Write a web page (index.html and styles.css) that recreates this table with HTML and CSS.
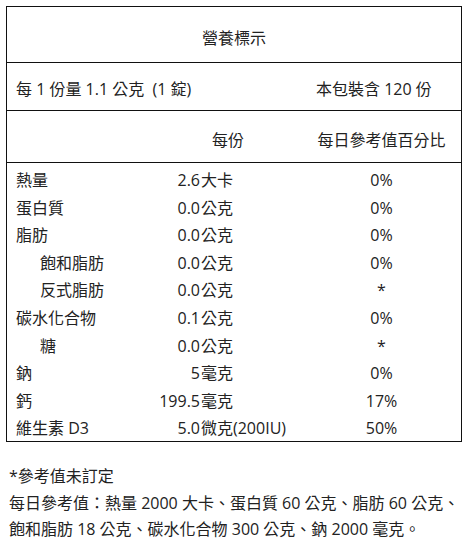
FILE: index.html
```html
<!DOCTYPE html>
<html lang="zh-Hant">
<head>
<meta charset="utf-8">
<title>營養標示</title>
<link rel="stylesheet" href="styles.css">
</head>
<body>
<div class="page">
  <div class="panel">
    <div class="title">營養標示</div>
    <div class="serving">
      <span class="serving-size">每 1 份量 1.1 公克&nbsp; (1 錠)</span>
      <span class="serving-count">本包裝含 120 份</span>
    </div>
    <div class="head">
      <span class="head-per">每份</span>
      <span class="head-pct">每日參考值百分比</span>
    </div>
    <div class="rows">
      <span class="name">熱量</span><span class="num">2.6</span><span class="unit">大卡</span><span class="pct">0%</span>
      <span class="name">蛋白質</span><span class="num">0.0</span><span class="unit">公克</span><span class="pct">0%</span>
      <span class="name">脂肪</span><span class="num">0.0</span><span class="unit">公克</span><span class="pct">0%</span>
      <span class="name sub">飽和脂肪</span><span class="num">0.0</span><span class="unit">公克</span><span class="pct">0%</span>
      <span class="name sub">反式脂肪</span><span class="num">0.0</span><span class="unit">公克</span><span class="pct">*</span>
      <span class="name">碳水化合物</span><span class="num">0.1</span><span class="unit">公克</span><span class="pct">0%</span>
      <span class="name sub">糖</span><span class="num">0.0</span><span class="unit">公克</span><span class="pct">*</span>
      <span class="name">鈉</span><span class="num">5</span><span class="unit">毫克</span><span class="pct">0%</span>
      <span class="name">鈣</span><span class="num">199.5</span><span class="unit">毫克</span><span class="pct">17%</span>
      <span class="name">維生素 D3</span><span class="num">5.0</span><span class="unit">微克(200IU)</span><span class="pct">50%</span>
    </div>
  </div>
  <div class="notes">
    <p>*參考值未訂定</p>
    <p>每日參考值：熱量 2000 大卡、蛋白質 60 公克、脂肪 60 公克、<br>飽和脂肪 18 公克、碳水化合物 300 公克、鈉 2000 毫克。</p>
  </div>
</div>
</body>
</html>
```

FILE: styles.css
```css
html, body {
  margin: 0;
  padding: 0;
  background: #fff;
}

body {
  font-family: "Open Sans", "Noto Sans CJK TC", sans-serif;
  font-size: 16px;
  color: #222;
}

.page {
  padding: 6px 0 0 6px;
}

.panel {
  width: 454px;
  border: 1px solid #111;
}

.title {
  height: 47px;
  padding-top: 8px;
  line-height: 47px;
  text-align: center;
  border-bottom: 1px solid #111;
}

.serving,
.head,
.rows {
  display: grid;
  grid-template-columns: 134px 50px 115px 133px;
  column-gap: 0;
  padding-left: 9px;
  white-space: nowrap;
}

.serving {
  height: 42px;
  padding-top: 5px;
  line-height: 42px;
  border-bottom: 1px solid #111;
}

.serving-size {
  grid-column: 1 / 4;
  white-space: pre;
}

.serving-count {
  grid-column: 4;
  padding-left: 1px;
}

.head {
  height: 43px;
  padding-top: 8px;
  line-height: 43px;
  border-bottom: 1px solid #111;
}

.head-per {
  grid-column: 3;
  padding-left: 12px;
}

.head-pct {
  grid-column: 4;
  text-align: center;
}

.rows {
  padding-top: 4px;
  height: 274px;
  line-height: 27.6px;
}

.name {
  grid-column: 1;
}

.name.sub {
  padding-left: 24px;
}

.num {
  grid-column: 2;
  text-align: right;
}

.unit {
  grid-column: 3;
  padding-left: 1px;
}

.pct {
  grid-column: 4;
  text-align: center;
}

.notes {
  margin-top: 21px;
  padding-left: 3px;
  line-height: 26.5px;
}

.notes p {
  margin: 0;
}
```
